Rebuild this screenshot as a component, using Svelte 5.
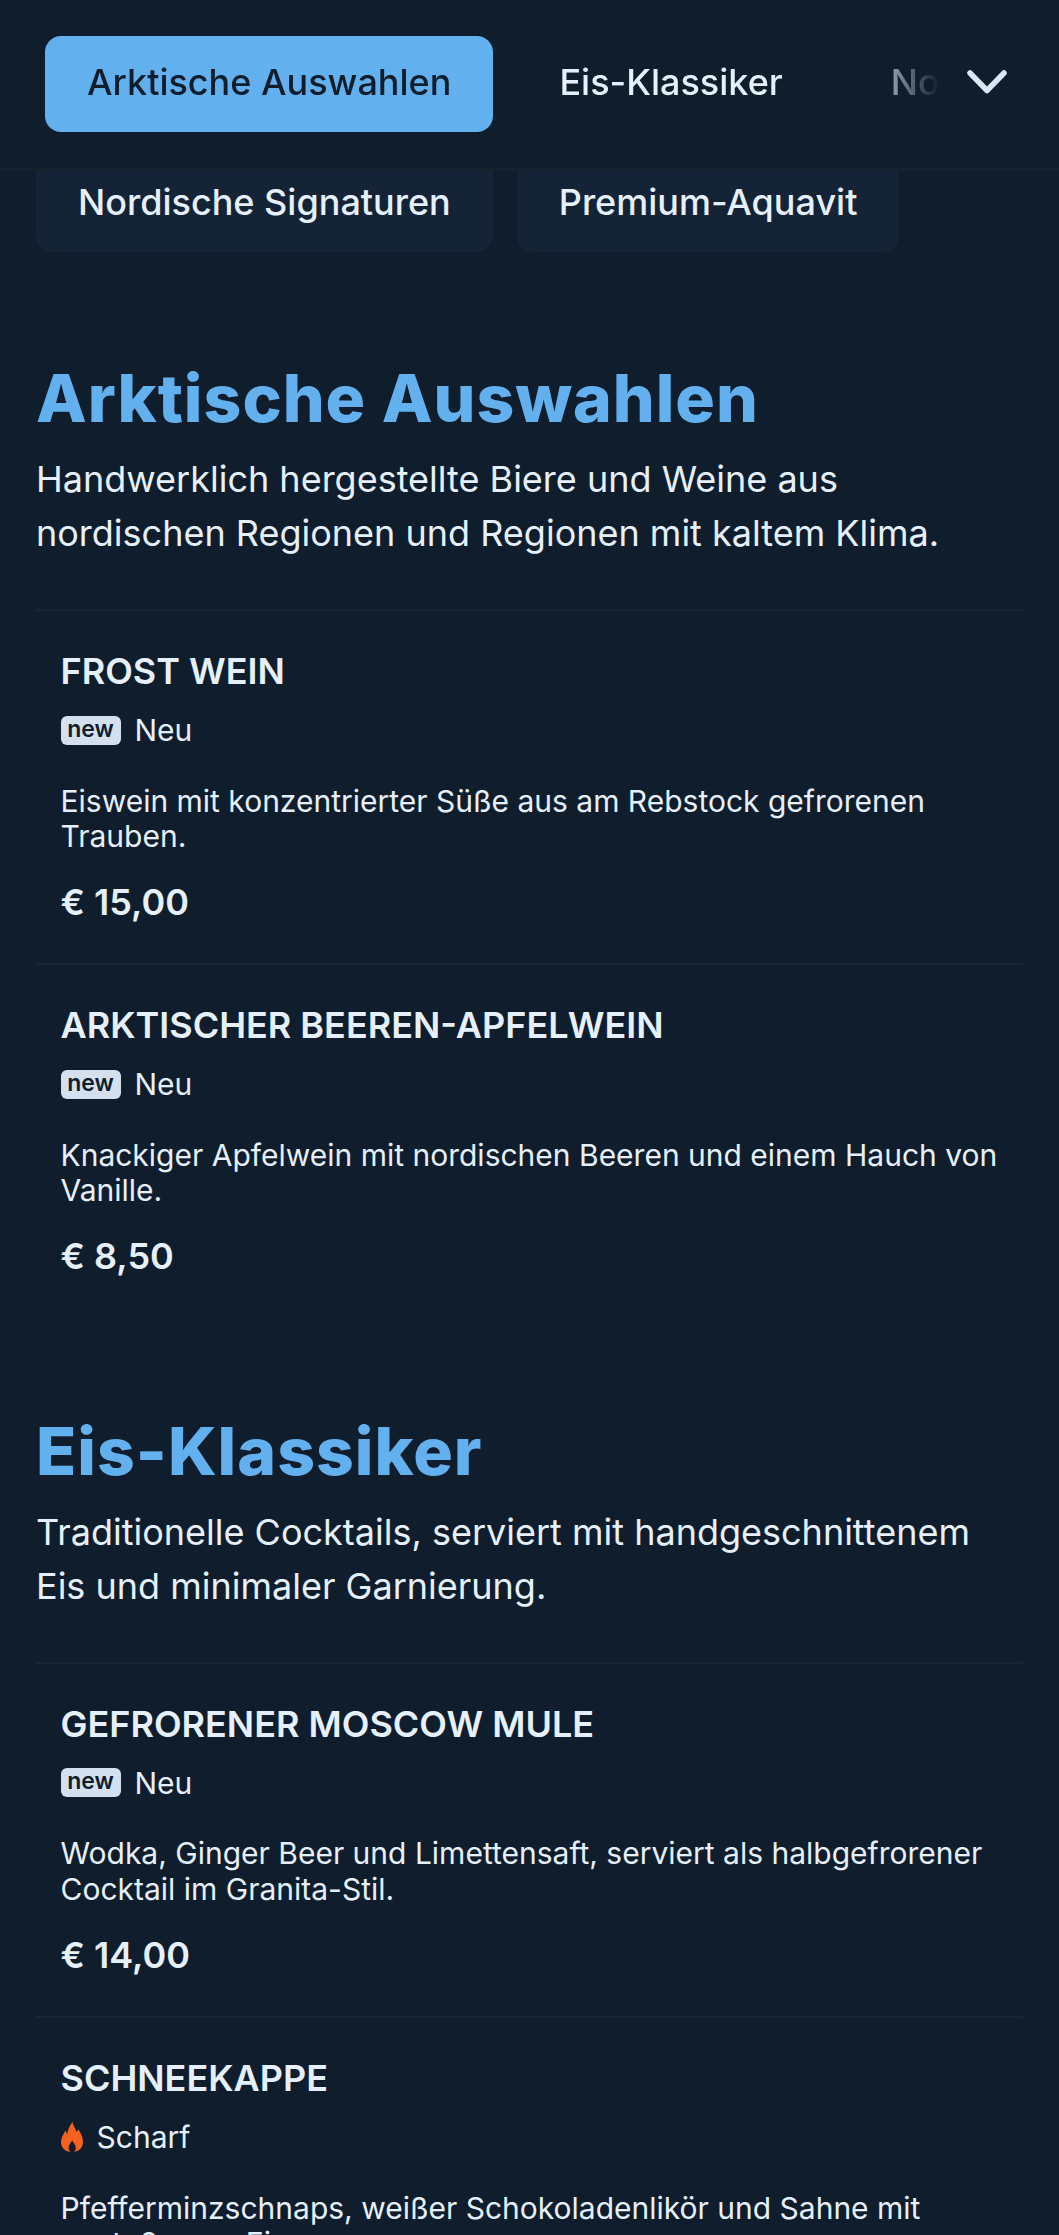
<script>
	const sections = [
		{
			title: "Arktische Auswahlen",
			text: "Handwerklich hergestellte Biere und Weine aus nordischen Regionen und Regionen mit kaltem Klima.",
			items: [
				{ name: "Frost Wein", tag: "new", desc: "Eiswein mit konzentrierter Süße aus am Rebstock gefrorenen Trauben.", price: "€ 15,00" },
				{ name: "Arktischer Beeren-Apfelwein", tag: "new", desc: "Knackiger Apfelwein mit nordischen Beeren und einem Hauch von Vanille.", price: "€ 8,50" }
			]
		},
		{
			title: "Eis-Klassiker",
			text: "Traditionelle Cocktails, serviert mit handgeschnittenem Eis und minimaler Garnierung.",
			items: [
				{ name: "Gefrorener Moscow Mule", tag: "new", desc: "Wodka, Ginger Beer und Limettensaft, serviert als halbgefrorener Cocktail im Granita-Stil.", price: "€ 14,00" },
				{ name: "Schneekappe", tag: "hot", desc: "Pfefferminzschnaps, weißer Schokoladenlikör und Sahne mit gestoßenem Eis.", price: "€ 12,00" }
			]
		}
	];
</script>

<div class="page">
	<header class="bar">
		<div class="tabs">
			<span class="tab active">Arktische Auswahlen</span>
			<span class="tab">Eis-Klassiker</span>
			<span class="tab">Nordische Signaturen</span>
		</div>
		<svg class="chev" viewBox="0 0 40 24" width="40" height="24">
			<path d="M3 3 L20 20.5 L37 3" fill="none" stroke="#dbe7f3" stroke-width="5.5" stroke-linecap="round" stroke-linejoin="round" />
		</svg>
	</header>

	<nav class="pills">
		<span class="pill">Nordische Signaturen</span>
		<span class="pill">Premium-Aquavit</span>
	</nav>

	{#each sections as s}
		<section>
			<h2>{s.title}</h2>
			<p class="intro">{s.text}</p>
			<div class="list">
				{#each s.items as item}
					<article>
						<h3>{item.name}</h3>
						<div class="tag">
							{#if item.tag === "new"}
								<span class="new">new</span><span>Neu</span>
							{:else}
								<svg class="fire" viewBox="0 0 22 30" width="22" height="30">
									<path fill="#f5621f" fill-rule="evenodd" d="M11.5 0 C12.2 4 14.6 6.5 15.6 10 C16.2 9 16.7 8.2 17.2 7.2 C20 11 22 15.5 22 20 C22 26 17.5 30 11 30 C4.5 30 0 26 0 20 C0 15.5 2.5 12 4.5 8.5 C5 10 5.6 11 6.2 12 C6.8 7.5 8.7 3.5 11.5 0 Z M11.2 18.5 C9.8 21 7.6 23 7.6 26 C7.6 27.8 8.6 29.2 9.6 30 L12.8 30 C13.8 29.2 14.8 27.8 14.8 26 C14.8 23 12.6 21 11.2 18.5 Z" />
								</svg>
								<span>Scharf</span>
							{/if}
						</div>
						<p class="desc">{item.desc}</p>
						<div class="price">{item.price}</div>
					</article>
				{/each}
			</div>
		</section>
	{/each}
</div>

<style>
	:global(body) {
		margin: 0;
		background: #101d2c;
	}
	.page {
		position: relative;
		height: 2235px;
		overflow: hidden;
		font-family: Inter, "Liberation Sans", sans-serif;
		color: #e6f0fb;
		background: #101d2c;
	}
	.bar {
		position: absolute;
		top: 0;
		left: 0;
		right: 0;
		height: 168px;
		background: #0f1d2c;
		border-bottom: 2px solid #15232f;
		display: flex;
		align-items: center;
		z-index: 2;
	}
	.tabs {
		display: flex;
		gap: 24px;
		width: 951px;
		padding-left: 45px;
		box-sizing: border-box;
		overflow: hidden;
		-webkit-mask-image: linear-gradient(to right, #000 860px, transparent 940px);
		mask-image: linear-gradient(to right, #000 860px, transparent 940px);
	}
	.tab {
		flex: none;
		padding: 0 42px;
		height: 96px;
		line-height: 93px;
		font-size: 36px;
		font-weight: 500;
		border-radius: 16px;
		white-space: nowrap;
	}
	.tab.active {
		background: #63b0ee;
		color: #0f1d2c;
	}
	.chev {
		margin-left: 16px;
		margin-bottom: 4px;
	}
	.pills {
		display: flex;
		gap: 24px;
		padding: 156px 36px 12.5px;
	}
	.pill {
		height: 96px;
		line-height: 93px;
		padding: 0 42px;
		font-size: 36px;
		font-weight: 500;
		background: #142336;
		border-radius: 16px;
		white-space: nowrap;
	}
	section {
		padding: 87.5px 36px 0;
	}
	h2 {
		margin: 0;
		font-size: 66px;
		line-height: 92px;
		font-weight: 800;
		letter-spacing: 1px;
		color: #63b0ee;
	}
	.intro {
		margin: 8px 0 0;
		font-size: 36px;
		line-height: 54px;
	}
	.list {
		margin-top: 49px;
	}
	article {
		padding: 38px 25px 39.5px 24.5px;
		border-top: 2px solid #16263a;
	}
	h3 {
		margin: 0;
		font-size: 36px;
		line-height: 44px;
		font-weight: 600;
		text-transform: uppercase;
	}
	.tag {
		display: flex;
		align-items: center;
		gap: 14px;
		margin-top: 15px;
		font-size: 30px;
		line-height: 44px;
	}
	.new {
		width: 60px;
		height: 29px;
		line-height: 26px;
		text-align: center;
		background: #d5e0ee;
		color: #101d2c;
		border-radius: 6px;
		font-size: 23px;
		font-weight: 600;
	}
	.desc {
		margin: 31.5px 0 0;
		font-size: 30px;
		line-height: 35.6px;
	}
	.price {
		margin-top: 25px;
		font-size: 36px;
		line-height: 44px;
		font-weight: 600;
	}
</style>
